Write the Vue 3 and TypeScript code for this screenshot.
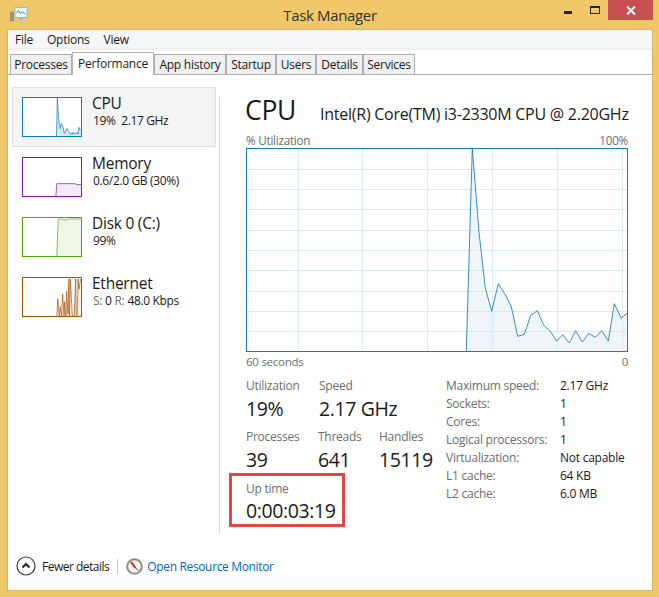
<script setup lang="ts">
interface Stat { label: string; value: string; width: number }

const tabs = [
  { name: 'Processes', width: 62 },
  { name: 'Performance', width: 82, active: true },
  { name: 'App history', width: 72 },
  { name: 'Startup', width: 50 },
  { name: 'Users', width: 40 },
  { name: 'Details', width: 47 },
  { name: 'Services', width: 52 },
]

const statRows: Stat[][] = [
  [
    { label: 'Utilization', value: '19%', width: 73 },
    { label: 'Speed', value: '2.17 GHz', width: 120 },
  ],
  [
    { label: 'Processes', value: '39', width: 72 },
    { label: 'Threads', value: '641', width: 61 },
    { label: 'Handles', value: '15119', width: 60 },
  ],
]

const details = [
  ['Maximum speed:', '2.17 GHz'],
  ['Sockets:', '1'],
  ['Cores:', '1'],
  ['Logical processors:', '1'],
  ['Virtualization:', 'Not capable'],
  ['L1 cache:', '64 KB'],
  ['L2 cache:', '6.0 MB'],
]

// Measured in page coordinates, relative to the chart's top-left corner.
const cpuAbs: [number, number][] = [
  [466.3, 352], [472.3, 149.3], [479, 233.3], [485.3, 289], [491.7, 312.3], [498.3, 284.7],
  [505, 295], [511.3, 307.7], [517.7, 337.3], [524.3, 335.3], [530.7, 316.3], [537.3, 311.7],
  [543.7, 326.3], [550.3, 332.3], [556.7, 342], [562.7, 335.7], [569.3, 344], [575.7, 331.7],
  [582.3, 343], [588.7, 334.3], [595.3, 338.3], [601.7, 331.7], [608.3, 342], [614.3, 304.7],
  [621.3, 319.3], [627.3, 314],
]
const cpu = cpuAbs.map(([x, y]) => [x - 246, y - 149] as [number, number])
const toPts = (p: [number, number][]) => p.map(([x, y]) => `${x.toFixed(1)},${y.toFixed(1)}`).join(' ')

const cpuLine = toPts(cpu)
const cpuArea = toPts([...cpu, [381, 203]])
const vLines = [52, 116, 181, 246, 311, 376]
const hLines = [21, 41, 61, 82, 102, 122, 143, 163, 183]

const miniCpu = cpu.map(([x, y]) => [(x / 382) * 60, (y / 203) * 40] as [number, number])
const ethernet: [number, number][] = [
  [35, 40], [36, 22], [37.5, 40], [38.5, 30], [40, 40], [41, 17], [42.5, 40], [43, 25], [44.5, 40],
  [45, 14], [46.5, 38], [47.5, 1], [48, 40], [49, 1], [51, 40], [53, 40], [54.5, 1], [55, 39], [56, 40], [57, 1], [58, 12], [59.5, 1],
]

const charts = [
  {
    name: 'CPU', sub: '19%  2.17 GHz', color: '#117dbb', fill: '#d6e8f3', selected: true,
    line: toPts(miniCpu), area: toPts([...miniCpu, [60, 40]]),
  },
  {
    name: 'Memory', sub: '0.6/2.0 GB (30%)', color: '#8b12ae', fill: '#f1ecf5', selected: false,
    line: '34,40 35,27 54,27 55,28 60,28', area: '34,40 35,27 54,27 55,28 60,28 60,40',
  },
  {
    name: 'Disk 0 (C:)', sub: '99%', color: '#4da60c', fill: '#eff6e8', selected: false,
    line: '35,40 36.5,1 41,1 42,2 45,2 46,1 60,1', area: '35,40 36.5,1 60,1 60,40',
  },
  {
    name: 'Ethernet', sub: '', color: '#a74f01', fill: '#fcf3eb', selected: false,
    line: toPts(ethernet), area: toPts([...ethernet, [60, 40]]),
  },
]
</script>

<template>
  <div class="frame">
    <header class="titlebar">
      <svg class="app-icon" width="18" height="16" viewBox="0 0 18 16">
        <rect x="0.5" y="5" width="3" height="9" fill="#8f9a8e" stroke="#6b7568" stroke-width="0.5" />
        <rect x="1" y="5" width="2" height="2" fill="#4fbf4f" />
        <rect x="5" y="0.5" width="12" height="10" fill="#eef6fa" stroke="#9fb4c0" />
        <polyline points="6.5,6 8.5,3.5 10.5,6.5 12.5,5 15.5,7" fill="none" stroke="#3c8fc4" stroke-width="1" />
        <rect x="9.5" y="11" width="3" height="2" fill="#a9b2b6" />
        <rect x="7" y="13" width="8" height="1.5" fill="#c5ccd0" />
      </svg>
      <div class="title">Task Manager</div>
      <div class="controls">
        <span class="min"></span>
        <span class="max"></span>
        <span class="close">
          <svg width="10" height="9" viewBox="0 0 10 9">
            <path d="M1 0.5 L9 8.5 M9 0.5 L1 8.5" stroke="#fff" stroke-width="2" fill="none" />
          </svg>
        </span>
      </div>
    </header>

    <div class="window">
      <nav class="menu">
        <span>File</span>
        <span>Options</span>
        <span>View</span>
      </nav>

      <div class="tabs">
        <div
          v-for="tab in tabs"
          :key="tab.name"
          class="tab"
          :class="{ active: tab.active }"
          :style="{ width: tab.width + 'px' }"
        >{{ tab.name }}</div>
      </div>

      <main class="main">
        <aside class="sidebar">
          <div v-for="c in charts" :key="c.name" class="item" :class="{ selected: c.selected }">
            <svg class="mini" width="60" height="40" viewBox="0 0 60 40" :style="{ borderColor: c.color }" preserveAspectRatio="none">
              <polygon :points="c.area" :fill="c.fill" />
              <polyline :points="c.line" fill="none" :stroke="c.color" stroke-width="0.9" stroke-opacity="0.8" />
            </svg>
            <div class="item-text">
              <div class="item-name">{{ c.name }}</div>
              <div v-if="c.sub" class="item-sub">{{ c.sub }}</div>
              <div v-else class="item-sub net">
                <span class="muted">S:</span>
                <span>0</span>
                <span class="muted">R:</span>
                <span>48.0 Kbps</span>
              </div>
            </div>
          </div>
        </aside>

        <div class="divider"></div>

        <section class="panel">
          <div class="head">
            <span class="big">CPU</span>
            <span class="model">Intel(R) Core(TM) i3-2330M CPU @ 2.20GHz</span>
          </div>

          <div class="axis top"><span>% Utilization</span><span>100%</span></div>
          <svg class="chart" width="382" height="204" viewBox="0 0 382 204">
            <line v-for="x in vLines" :key="'v' + x" :x1="x + 0.5" :x2="x + 0.5" y1="0" y2="204" stroke="#d9eaf4" />
            <line v-for="y in hLines" :key="'h' + y" :y1="y + 0.5" :y2="y + 0.5" x1="0" x2="382" stroke="#d9eaf4" />
            <polygon :points="cpuArea" fill="#d9e6f0" fill-opacity="0.4" />
            <polyline :points="cpuLine" fill="none" stroke="#117dbb" stroke-width="1" stroke-opacity="0.85" />
            <rect x="0.5" y="0.5" width="381" height="203" fill="none" stroke="#117dbb" />
          </svg>
          <div class="axis bottom"><span>60 seconds</span><span>0</span></div>

          <div class="stats">
            <div class="stats-left">
              <div v-for="(row, i) in statRows" :key="i" class="stat-row">
                <div v-for="s in row" :key="s.label" class="stat" :style="{ width: s.width + 'px' }">
                  <div class="stat-label">{{ s.label }}</div>
                  <div class="stat-value">{{ s.value }}</div>
                </div>
              </div>
              <div class="stat uptime">
                <div class="stat-label">Up time</div>
                <div class="stat-value">0:00:03:19</div>
              </div>
            </div>
            <div class="stats-right">
              <template v-for="d in details" :key="d[0]">
                <span class="d-label">{{ d[0] }}</span>
                <span class="d-value">{{ d[1] }}</span>
              </template>
            </div>
          </div>
        </section>
      </main>

      <footer class="footer">
        <span class="toggle">
          <svg width="20" height="20" viewBox="0 0 20 20">
            <circle cx="10" cy="10" r="9" fill="#fff" stroke="#3a3a3a" stroke-width="1.2" />
            <path d="M6.5 11.5 L10 8 L13.5 11.5" fill="none" stroke="#222" stroke-width="2" />
          </svg>
        </span>
        <span class="fewer">Fewer details</span>
        <span class="sep"></span>
        <svg class="gauge" width="17" height="17" viewBox="0 0 17 17">
          <circle cx="8.5" cy="8.5" r="7.3" fill="#f6f3ee" stroke="#8f8c86" stroke-width="2" />
          <path d="M5 4 L9.5 10" stroke="#c8282a" stroke-width="2" />
          <path d="M9.5 10 L12.5 12.5" stroke="#555" stroke-width="1" />
        </svg>
        <a class="link">Open Resource Monitor</a>
      </footer>
    </div>
  </div>
</template>

<style>
html, body { margin: 0; background: #f0c869; }
</style>

<style scoped>
.frame {
  width: 659px;
  height: 597px;
  display: flex;
  flex-direction: column;
  background: #f0c869;
  font-family: "Open Sans", "Noto Sans", sans-serif;
  font-size: 12px;
  letter-spacing: -0.25px;
  color: #1a1a1a;
  overflow: hidden;
}
.titlebar {
  height: 29px;
  flex: none;
  display: flex;
  align-items: flex-start;
  position: relative;
}
.app-icon { margin: 7px 0 0 10px; }
.title {
  position: absolute;
  left: 1px;
  right: 0;
  top: 5px;
  text-align: center;
  font-size: 15px;
  line-height: 20px;
  letter-spacing: -0.35px;
  color: #333;
}
.controls {
  margin-left: auto;
  margin-right: 6px;
  display: flex;
  position: relative;
}
.min {
  width: 8px;
  height: 3px;
  background: #222;
  margin: 11px 18px 0 0;
}
.max {
  width: 8px;
  height: 5px;
  border: 1px solid #222;
  border-top-width: 2px;
  margin: 6px 8px 0 0;
  box-sizing: content-box;
}
.close {
  width: 45px;
  height: 20px;
  background: #c75050;
  display: flex;
  align-items: center;
  justify-content: center;
}
.window {
  flex: 1;
  margin: 0 6px 6px 7px;
  border: 1px solid #d9b45e;
  background: #fff;
  display: flex;
  flex-direction: column;
  min-height: 0;
}
.menu {
  height: 18px;
  background: #f5f6f7;
  border-bottom: 2px solid #eeeff0;
  display: flex;
  align-items: center;
  flex: none;
}
.menu span { line-height: 18px; margin: 2px 0 0 7px; }
.menu span:nth-child(2) { margin-left: 14px; }
.menu span:nth-child(3) { margin-left: 14px; }
.tabs {
  height: 24px;
  box-sizing: content-box;
  border-bottom: 1px solid #acacac;
  display: flex;
  align-items: flex-end;
  padding-left: 2px;
  flex: none;
}
.tab {
  box-sizing: border-box;
  height: 20px;
  line-height: 20px;
  border: 1px solid #acacac;
  border-bottom: none;
  background: #f0f0f0;
  text-align: center;
}
.tab.active {
  height: 23px;
  margin-bottom: -1px;
  background: #fff;
  line-height: 21px;
  position: relative;
  border-color: #b4b4b4;
}
.main {
  flex: 1;
  display: flex;
  min-height: 0;
}
.sidebar {
  width: 204px;
  margin: 12px 0 0 4px;
  flex: none;
}
.item {
  box-sizing: border-box;
  height: 60px;
  display: flex;
  padding: 9px 0 0 9px;
  border: 1px solid transparent;
}
.item.selected {
  background: #f4f4f4;
  border-color: #e0e0e0;
}
.mini {
  box-sizing: border-box;
  border: 1px solid;
  background: #fff;
  flex: none;
}
.item-text { margin-left: 10px; }
.item-name {
  font-size: 15.5px;
  line-height: 17px;
  margin-top: -2px;
}
.item-sub {
  line-height: 17px;
  margin-left: 1px;
  white-space: pre;
  letter-spacing: -0.35px;
}
.item-sub.net {
  white-space: normal;
  display: flex;
  gap: 3px;
}
.muted { color: #6d6d6d; }
.divider {
  width: 1px;
  background: #d9d9d9;
  margin: 22px 0 6px 3px;
  flex: none;
}
.panel {
  width: 382px;
  margin-left: 26px;
  flex: none;
  display: flex;
  flex-direction: column;
}
.head {
  height: 57px;
  display: flex;
  align-items: baseline;
  padding-top: 15px;
  box-sizing: border-box;
  margin-left: -1px;
  white-space: nowrap;
}
.big { font-size: 26.5px; line-height: 40px; letter-spacing: -0.3px; }
.model { font-size: 16px; margin-left: 24px; }
.axis {
  display: flex;
  justify-content: space-between;
  color: #6d6d6d;
  line-height: 16px;
  font-size: 11.5px;
}
.axis.top { font-size: 11.7px; }
.axis.bottom { margin-top: 2px; }
.chart { display: block; flex: none; }
.stats {
  display: flex;
  margin-top: 8px;
}
.stats-left { width: 200px; flex: none; }
.stat-row { display: flex; margin-bottom: 6px; }
.stat-row:nth-child(2) { margin-bottom: 7px; }
.stat { flex: none; }
.stat-label { color: #6d6d6d; line-height: 16px; }
.stat-value {
  font-size: 19.5px;
  line-height: 28px;
  margin-top: 1px;
  letter-spacing: -0.4px;
}
.uptime { position: relative; }
.uptime .stat-value { margin-top: 0; }
.uptime::after {
  content: "";
  position: absolute;
  left: -17px;
  top: -8px;
  width: 116px;
  height: 54px;
  box-sizing: border-box;
  border: 3px solid #e8453f;
}
.stats-right {
  display: grid;
  grid-template-columns: 114px auto;
  grid-auto-rows: 18px;
  line-height: 18px;
  margin-top: -1px;
  align-self: flex-start;
}
.d-label { color: #6d6d6d; }
.footer {
  height: 50px;
  flex: none;
  display: flex;
  align-items: center;
  padding: 2px 0 0 8px;
  box-sizing: border-box;
}
.toggle { display: flex; width: 20px; height: 20px; }
.fewer { margin-left: 6px; letter-spacing: -0.5px; }
.sep {
  width: 1px;
  height: 15px;
  background: #c8c8c8;
  margin: 0 8px;
}
.gauge { flex: none; }
.link { color: #0066cc; margin-left: 4px; letter-spacing: -0.35px; }
</style>
